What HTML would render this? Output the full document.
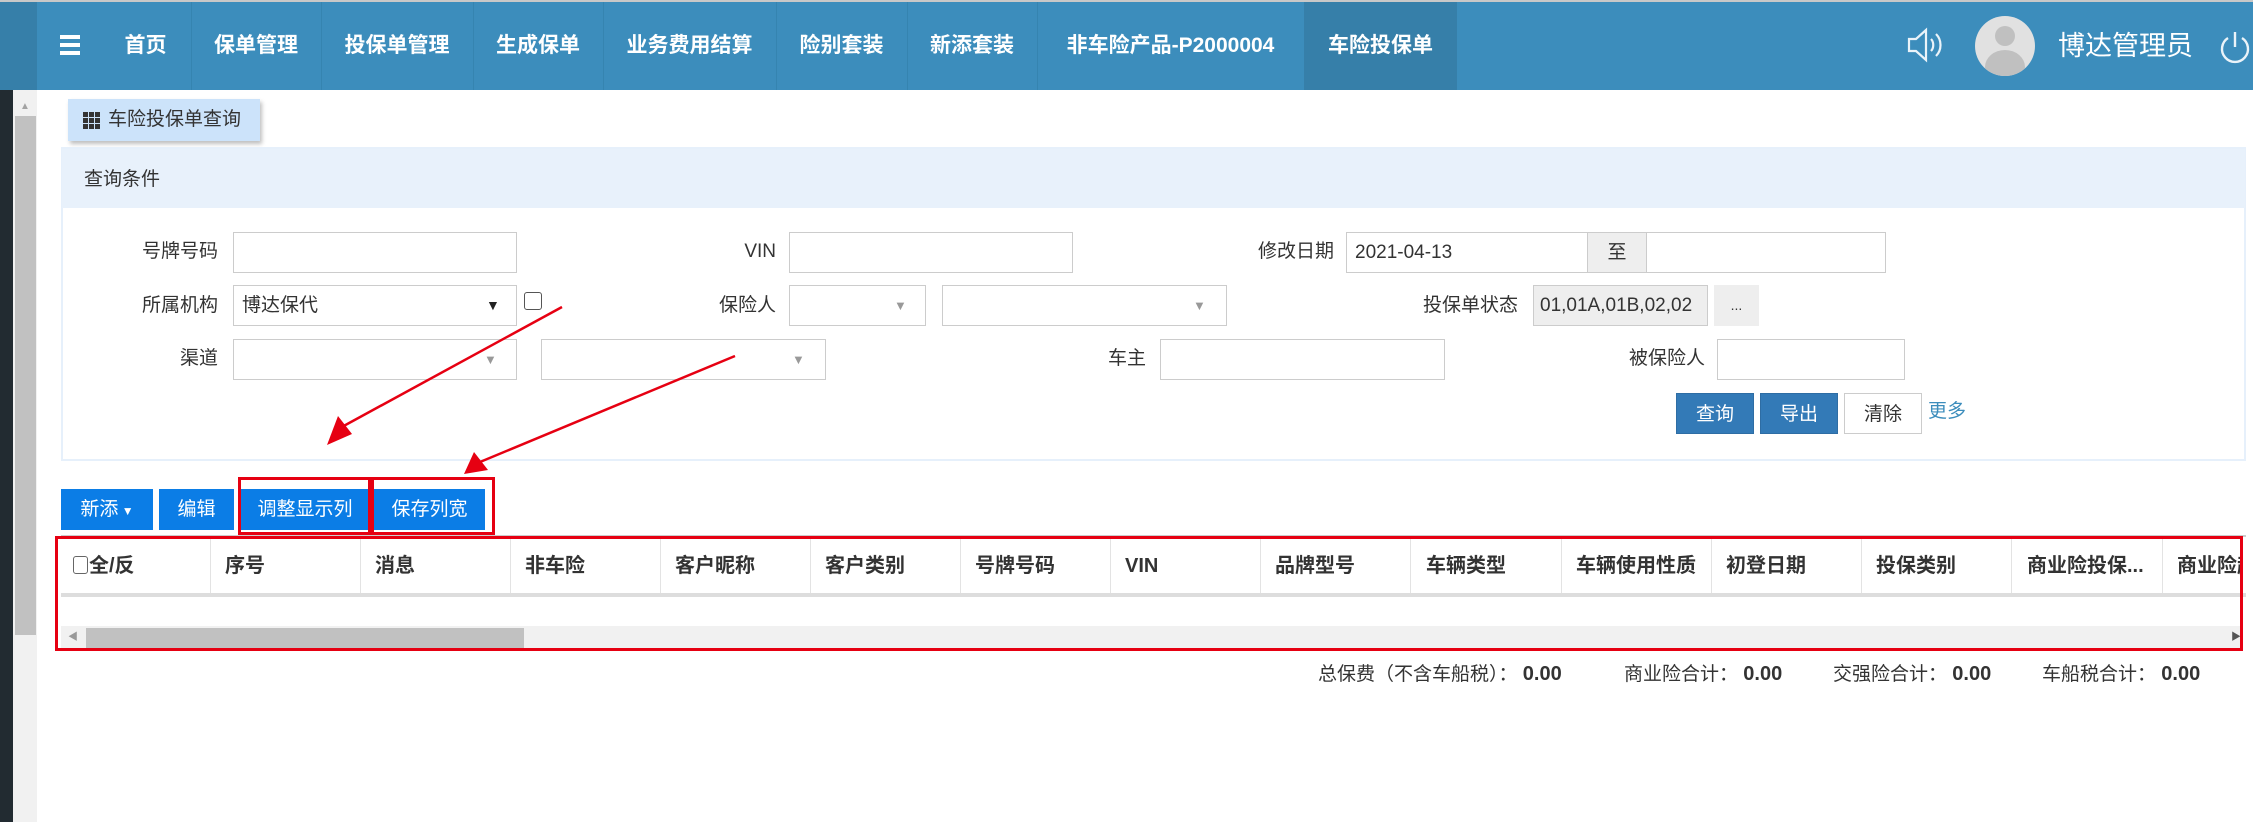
<!DOCTYPE html>
<html><head><meta charset="utf-8"><style>
*{margin:0;padding:0;box-sizing:border-box}
body{width:2253px;height:822px;overflow:hidden;background:#fff;position:relative;font-family:"Liberation Sans","Noto Sans CJK SC",sans-serif;color:#333}
.a{position:absolute}
.hdr{left:0;top:0;width:2253px;height:90px;background:#3c8dbc;border-top:2px solid #c8c8c8}
.nav{top:2px;height:88px;color:#fff;font-weight:bold;font-size:21px;line-height:88px;text-align:center}
.sep{top:2px;width:1px;height:88px;background:#3584b0}
.lbl{font-size:19px;text-align:right;line-height:40px;color:#333}
.inp{border:1px solid #ccc;background:#fff;height:41px;font-size:19px;line-height:39px;padding-left:8px;color:#333}
.arr{font-size:13px;color:#999}
.btn{height:41px;line-height:41px;text-align:center;font-size:19px;color:#fff;background:#0b7de6}
.th{top:539px;height:54px;line-height:54px;font-weight:bold;font-size:20px;padding-left:14px;border-right:1px solid #e3e3e3;width:150px}
.tot{top:660px;font-size:19px;line-height:28px}
.tot b{font-size:20px}
.g{position:absolute;width:5px;height:5px;background:#333}
</style></head><body>
<div class="a hdr"></div>
<div class="a" style="left:0;top:2px;width:37px;height:88px;background:#367fa9"></div>
<div class="a" style="left:60px;top:35px;width:20px;height:4px;background:#fff"></div>
<div class="a" style="left:60px;top:43px;width:20px;height:4px;background:#fff"></div>
<div class="a" style="left:60px;top:51px;width:20px;height:4px;background:#fff"></div>
<div class="a nav" style="left:100px;width:91px">首页</div>
<div class="a sep" style="left:191px"></div>
<div class="a nav" style="left:191px;width:130px">保单管理</div>
<div class="a sep" style="left:321px"></div>
<div class="a nav" style="left:321px;width:152px">投保单管理</div>
<div class="a sep" style="left:473px"></div>
<div class="a nav" style="left:473px;width:130px">生成保单</div>
<div class="a sep" style="left:603px"></div>
<div class="a nav" style="left:603px;width:173px">业务费用结算</div>
<div class="a sep" style="left:776px"></div>
<div class="a nav" style="left:776px;width:131px">险别套装</div>
<div class="a sep" style="left:907px"></div>
<div class="a nav" style="left:907px;width:130px">新添套装</div>
<div class="a sep" style="left:1037px"></div>
<div class="a nav" style="left:1037px;width:267px">非车险产品-P2000004</div>
<div class="a nav" style="left:1304px;width:153px;background:#367fa9">车险投保单</div>
<svg class="a" style="left:1906px;top:24px" width="40" height="42" viewBox="0 0 40 42" fill="none" stroke="#eaf3f9" stroke-width="2.2"><path d="M3 15h7l10-9v30l-10-9H3z"/><path d="M25 15c3 3 3 9 0 12"/><path d="M30 10c6 6 6 16 0 22"/></svg>
<div class="a" style="left:1975px;top:16px;width:60px;height:60px;border-radius:50%;background:#e1e1e1;overflow:hidden"><div class="a" style="left:20px;top:10px;width:20px;height:20px;border-radius:50%;background:#c0c0c0"></div><div class="a" style="left:10px;top:34px;width:40px;height:34px;border-radius:50%;background:#c0c0c0"></div></div>
<div class="a" style="left:2058px;top:26px;font-size:27px;color:#fff;line-height:40px">博达管理员</div>
<svg class="a" style="left:2220px;top:29px" width="30" height="36" viewBox="0 0 30 36" fill="none" stroke="#eaf3f9" stroke-width="2.4"><path d="M8 9a13 13 0 1 0 14 0"/><path d="M15 3v15"/></svg>
<!-- left scrollbar -->
<div class="a" style="left:0;top:90px;width:13px;height:732px;background:#222b31"></div>
<div class="a" style="left:13px;top:90px;width:24px;height:732px;background:#f1f1f1"></div>
<div class="a" style="left:15px;top:116px;width:21px;height:519px;background:#c1c1c1"></div>
<div class="a" style="left:20px;top:101px;font-size:10px;color:#a3a3a3">▲</div>
<!-- tab -->
<div class="a" style="left:68px;top:99px;width:192px;height:42px;background:#cce3fa;box-shadow:2px 3px 4px rgba(0,0,0,.25)"></div>
<div class="g" style="left:83px;top:112px"></div><div class="g" style="left:89px;top:112px"></div><div class="g" style="left:95px;top:112px"></div>
<div class="g" style="left:83px;top:118px"></div><div class="g" style="left:89px;top:118px"></div><div class="g" style="left:95px;top:118px"></div>
<div class="g" style="left:83px;top:124px"></div><div class="g" style="left:89px;top:124px"></div><div class="g" style="left:95px;top:124px"></div>
<div class="a" style="left:108px;top:99px;font-size:19px;line-height:42px;color:#333">车险投保单查询</div>
<!-- panel -->
<div class="a" style="left:61px;top:147px;width:2185px;height:314px;border:2px solid #e6f0fb;background:#fff"></div>
<div class="a" style="left:62px;top:149px;width:2183px;height:59px;background:#e8f1fb"></div>
<div class="a" style="left:84px;top:164px;font-size:19px;line-height:32px">查询条件</div>
<!-- row1 -->
<div class="a lbl" style="left:100px;top:232px;width:118px">号牌号码</div>
<div class="a inp" style="left:233px;top:232px;width:284px"></div>
<div class="a lbl" style="left:700px;top:232px;width:76px">VIN</div>
<div class="a inp" style="left:789px;top:232px;width:284px"></div>
<div class="a lbl" style="left:1200px;top:232px;width:134px">修改日期</div>
<div class="a inp" style="left:1346px;top:232px;width:242px">2021-04-13</div>
<div class="a inp" style="left:1587px;top:232px;width:60px;background:#eee;text-align:center;padding:0">至</div>
<div class="a inp" style="left:1646px;top:232px;width:240px"></div>
<!-- row2 -->
<div class="a lbl" style="left:100px;top:286px;width:118px">所属机构</div>
<div class="a inp" style="left:233px;top:285px;width:284px">博达保代<span class="a" style="left:252px;top:0;font-size:14px;color:#222">▼</span></div>
<div class="a" style="left:524px;top:292px;width:18px;height:18px;border:1px solid #555;border-radius:3px;background:#fff"></div>
<div class="a lbl" style="left:700px;top:286px;width:76px">保险人</div>
<div class="a inp" style="left:789px;top:285px;width:137px"><span class="a arr" style="left:104px">▼</span></div>
<div class="a inp" style="left:942px;top:285px;width:285px"><span class="a arr" style="left:250px">▼</span></div>
<div class="a lbl" style="left:1400px;top:286px;width:118px">投保单状态</div>
<div class="a inp" style="left:1533px;top:285px;width:175px;background:#eee;padding-left:6px">01,01A,01B,02,02</div>
<div class="a" style="left:1714px;top:285px;width:45px;height:41px;background:#eee;text-align:center;line-height:41px;font-size:14px">...</div>
<!-- row3 -->
<div class="a lbl" style="left:100px;top:339px;width:118px">渠道</div>
<div class="a inp" style="left:233px;top:339px;width:284px"><span class="a arr" style="left:250px">▼</span></div>
<div class="a inp" style="left:541px;top:339px;width:285px"><span class="a arr" style="left:250px">▼</span></div>
<div class="a lbl" style="left:1060px;top:339px;width:86px">车主</div>
<div class="a inp" style="left:1160px;top:339px;width:285px"></div>
<div class="a lbl" style="left:1590px;top:339px;width:115px">被保险人</div>
<div class="a inp" style="left:1717px;top:339px;width:188px"></div>
<!-- row4 -->
<div class="a btn" style="left:1676px;top:393px;width:78px;background:#337ab7;border:1px solid #2e6da4">查询</div>
<div class="a btn" style="left:1760px;top:393px;width:78px;background:#337ab7;border:1px solid #2e6da4">导出</div>
<div class="a btn" style="left:1844px;top:393px;width:78px;background:#fff;color:#333;border:1px solid #ccc">清除</div>
<div class="a" style="left:1928px;top:393px;font-size:19px;line-height:38px;color:#3c8dbc">更多</div>
<!-- toolbar -->
<div class="a btn" style="left:61px;top:489px;width:92px">新添<span style="font-size:12px"> ▼</span></div>
<div class="a btn" style="left:159px;top:489px;width:75px">编辑</div>
<div class="a btn" style="left:240px;top:489px;width:130px">调整显示列</div>
<div class="a btn" style="left:374px;top:489px;width:111px">保存列宽</div>
<!-- table -->
<div class="a" style="left:61px;top:535px;width:2185px;height:2px;background:#ccc"></div>
<div class="a" style="left:61px;top:593px;width:2185px;height:4px;background:#ddd"></div>
<div class="a th" style="left:61px;padding-left:12px"><span style="display:inline-block;width:15px;height:18px;border:1px solid #666;border-radius:3px;vertical-align:-2px;margin-right:1px"></span>全/反</div>
<div class="a th" style="left:211px">序号</div>
<div class="a th" style="left:361px">消息</div>
<div class="a th" style="left:511px">非车险</div>
<div class="a th" style="left:661px">客户昵称</div>
<div class="a th" style="left:811px">客户类别</div>
<div class="a th" style="left:961px">号牌号码</div>
<div class="a th" style="left:1111px">VIN</div>
<div class="a th" style="left:1261px">品牌型号</div>
<div class="a th" style="left:1412px">车辆类型</div>
<div class="a th" style="left:1562px">车辆使用性质</div>
<div class="a th" style="left:1712px">初登日期</div>
<div class="a th" style="left:1862px">投保类别</div>
<div class="a th" style="left:2013px">商业险投保...</div>
<div class="a th" style="left:2163px;width:80px;overflow:hidden;white-space:nowrap;border:none">商业险起</div>
<div class="a" style="left:61px;top:626px;width:2182px;height:23px;background:#f1f1f1"></div>
<div class="a" style="left:86px;top:628px;width:438px;height:21px;background:#c1c1c1"></div>
<div class="a" style="left:68px;top:628px;font-size:10px;color:#999;line-height:20px">◀</div>
<div class="a" style="left:2231px;top:628px;font-size:10px;color:#555;line-height:20px">▶</div>
<!-- red boxes -->
<div class="a" style="left:55px;top:536px;width:2188px;height:115px;border:3px solid #e60012"></div>
<div class="a" style="left:238px;top:477px;width:133px;height:58px;border:3px solid #e60012"></div>
<div class="a" style="left:371px;top:477px;width:124px;height:58px;border:3px solid #e60012"></div>
<svg class="a" style="left:0;top:0" width="2253" height="822"><g stroke="#e60012" stroke-width="2.5" fill="#e60012"><line x1="562" y1="307" x2="340" y2="428"/><polygon points="327,445 338,416 352,434" stroke="none"/><line x1="735" y1="356" x2="480" y2="462"/><polygon points="464,474 474,452 488,470" stroke="none"/></g></svg>
<!-- totals -->
<div class="a tot" style="left:1318px">总保费（不含车船税）： <b>0.00</b></div>
<div class="a tot" style="left:1624px">商业险合计： <b>0.00</b></div>
<div class="a tot" style="left:1833px">交强险合计： <b>0.00</b></div>
<div class="a tot" style="left:2042px">车船税合计： <b>0.00</b></div>
</body></html>
